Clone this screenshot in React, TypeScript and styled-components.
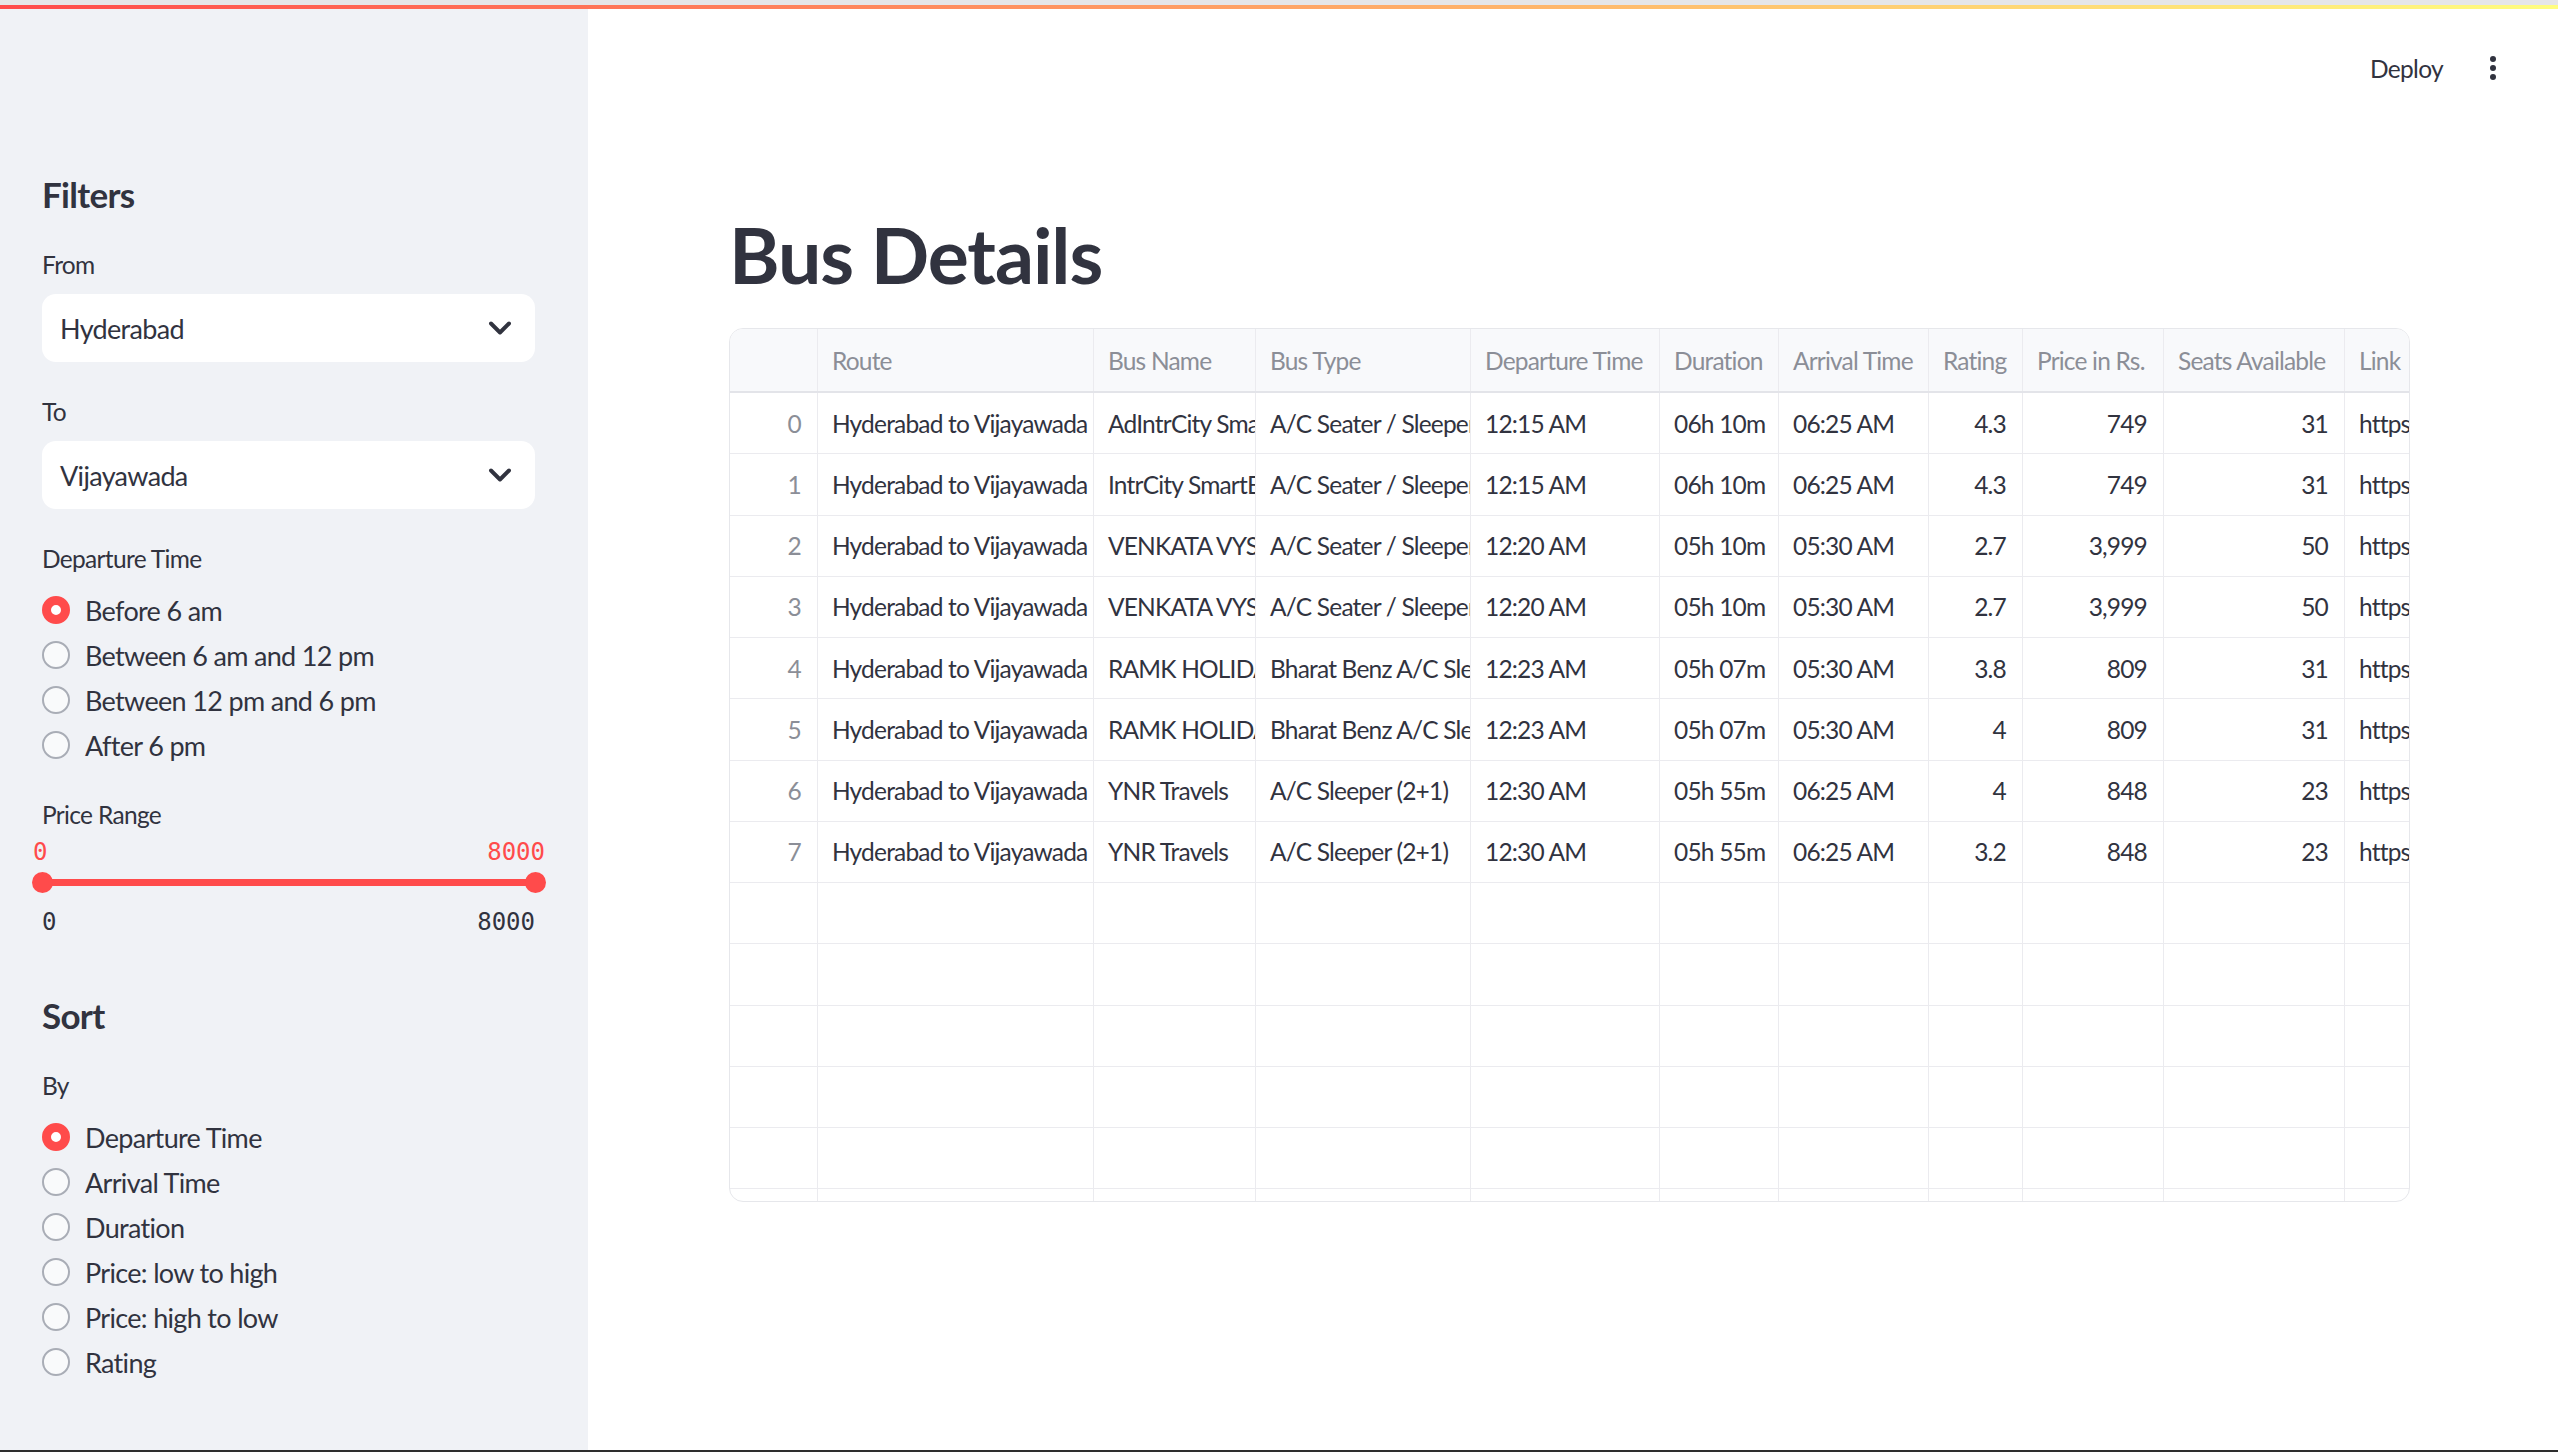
import React from "react";
import styled, { createGlobalStyle } from "styled-components";

const GlobalStyle = createGlobalStyle`
  html, body { margin: 0; padding: 0; background: #ffffff; }
  body {
    font-family: Lato, "Noto Sans", "Liberation Sans", sans-serif;
    color: #31333f;
    letter-spacing: -0.042em;
  }
  * { box-sizing: border-box; }
`;

const Page = styled.div`
  width: 2558px;
  height: 1452px;
  display: flex;
  flex-direction: column;
  overflow: hidden;
  background: #ffffff;
`;

const TopEdge = styled.div`
  height: 5px;
  flex: none;
  background: #e6e6e8;
`;

const Decoration = styled.div`
  height: 4px;
  flex: none;
  background: linear-gradient(90deg, #ff4b4b, #fffd80);
`;

const Body = styled.div`
  flex: 1;
  min-height: 0;
  display: flex;
`;

const BottomEdge = styled.div`
  height: 2px;
  flex: none;
  background: #2e2e2e;
`;

/* ---------- Sidebar ---------- */

const Sidebar = styled.aside`
  width: 588px;
  flex: none;
  background: #f0f2f6;
  padding: 164px 53px 0 42px;
  display: flex;
  flex-direction: column;
`;

const SectionTitle = styled.h2<{ $top?: number }>`
  margin: ${(p) => p.$top ?? 0}px 0 0;
  font-size: 35px;
  line-height: 42px;
  font-weight: 700;
  letter-spacing: -0.02em;
  color: #31333f;
`;

const FieldLabel = styled.div<{ $top?: number; $bottom?: number }>`
  margin: ${(p) => p.$top ?? 31.5}px 0 ${(p) => p.$bottom ?? 12.5}px;
  font-size: 24.5px;
  line-height: 35px;
  color: #31333f;
`;

const SelectBox = styled.div`
  height: 68px;
  background: #ffffff;
  border-radius: 14px;
  display: flex;
  align-items: center;
  justify-content: space-between;
  padding: 0 17px 0 18px;
  font-size: 27px;
  color: #31333f;
`;

const RadioGroup = styled.div`
  display: flex;
  flex-direction: column;
`;

const RadioRow = styled.label`
  height: 45px;
  display: flex;
  align-items: center;
  gap: 15px;
  font-size: 27px;
  color: #31333f;
`;

const RadioDot = styled.span<{ $checked?: boolean }>`
  width: 28px;
  height: 28px;
  flex: none;
  border-radius: 50%;
  background: ${(p) => (p.$checked ? "#ffffff" : "#f9fafb")};
  border: ${(p) => (p.$checked ? "9px solid #ff4b4b" : "2px solid #a9adb6")};
`;

const Slider = styled.div`
  margin-top: 6.5px;
  display: flex;
  flex-direction: column;
`;

const ValueRow = styled.div`
  height: 28px;
  margin: 0 -10px 0 -9px;
  display: flex;
  align-items: center;
  justify-content: space-between;
  font-family: "DejaVu Sans Mono", "Liberation Mono", monospace;
  font-size: 24px;
  letter-spacing: 0;
  color: #ff4b4b;
`;

const TrackRow = styled.div`
  height: 32px;
  margin: 0 -10.5px;
  display: flex;
  align-items: center;
`;

const Thumb = styled.span`
  width: 21px;
  height: 21px;
  flex: none;
  border-radius: 50%;
  background: #ff4b4b;
`;

const TrackBar = styled.span`
  flex: 1;
  height: 7px;
  margin: 0 -2px;
  background: #ff4b4b;
`;

const RangeRow = styled.div`
  height: 48px;
  display: flex;
  align-items: center;
  justify-content: space-between;
  font-family: "DejaVu Sans Mono", "Liberation Mono", monospace;
  font-size: 24px;
  letter-spacing: 0;
  color: #31333f;
`;

/* ---------- Main ---------- */

const Main = styled.main`
  flex: 1;
  min-width: 0;
  display: flex;
  flex-direction: column;
`;

const Toolbar = styled.div`
  height: 118px;
  flex: none;
  display: flex;
  align-items: center;
  justify-content: flex-end;
  gap: 46px;
  padding-right: 61px;
`;

const DeployButton = styled.span`
  font-size: 24.5px;
  color: #31333f;
`;

const Content = styled.div`
  padding-left: 141px;
  display: flex;
  flex-direction: column;
`;

const Title = styled.h1`
  margin: 80.5px 0 0;
  font-size: 77px;
  line-height: 92px;
  font-weight: 700;
  letter-spacing: -0.014em;
  color: #31333f;
`;

const COLUMNS = "88px 276px 162px 215px 189px 119px 150px 94px 141px 181px 1fr";

const Table = styled.div`
  margin-top: 28.5px;
  width: 1681px;
  height: 874px;
  border: 1px solid #e6e7eb;
  border-radius: 14px;
  overflow: hidden;
  display: flex;
  flex-direction: column;
`;

const HeaderRow = styled.div`
  height: 64px;
  flex: none;
  display: grid;
  grid-template-columns: ${COLUMNS};
  background: #f8f9fb;
  border-bottom: 2px solid #e3e4e9;
`;

const Row = styled.div`
  height: 61.25px;
  flex: none;
  display: grid;
  grid-template-columns: ${COLUMNS};
  border-bottom: 1px solid #ebebef;
`;

const FillerRow = styled.div`
  flex: 1;
  display: grid;
  grid-template-columns: ${COLUMNS};
`;

const Cell = styled.div<{ $align?: "left" | "right"; $tone?: "head" | "index" | "body" }>`
  min-width: 0;
  overflow: hidden;
  white-space: nowrap;
  display: flex;
  align-items: center;
  justify-content: ${(p) => (p.$align === "right" ? "flex-end" : "flex-start")};
  padding: ${(p) => (p.$align === "right" ? "0 16px 0 14px" : "0 0 0 14px")};
  border-right: 1px solid #ebebef;
  font-size: 24.5px;
  letter-spacing: -0.033em;
  color: ${(p) => (p.$tone === "head" || p.$tone === "index" ? "#8b8e97" : "#31333f")};
  &:last-child {
    border-right: none;
  }
`;

/* ---------- Icons ---------- */

const Chevron = () => (
  <svg width="36" height="36" viewBox="0 0 24 24" fill="none" stroke="#31333f" strokeWidth="2.6" strokeLinecap="round" strokeLinejoin="round">
    <path d="m6 9 6 6 6-6" />
  </svg>
);

const Kebab = () => (
  <svg width="8" height="24" viewBox="0 0 8 24" fill="#31333f">
    <circle cx="4" cy="3" r="3" />
    <circle cx="4" cy="12" r="3" />
    <circle cx="4" cy="21" r="3" />
  </svg>
);

/* ---------- Data ---------- */

const headers = [
  "",
  "Route",
  "Bus Name",
  "Bus Type",
  "Departure Time",
  "Duration",
  "Arrival Time",
  "Rating",
  "Price in Rs.",
  "Seats Available",
  "Link",
];

const rightAligned = new Set([0, 7, 8, 9]);

const link = "https://www.redbus.in/bus-tickets/hyderabad-to-vijayawada";
const route = "Hyderabad to Vijayawada";

const rows: string[][] = [
  ["0", route, "AdIntrCity SmartBus", "A/C Seater / Sleeper (2+1)", "12:15 AM", "06h 10m", "06:25 AM", "4.3", "749", "31", link],
  ["1", route, "IntrCity SmartBus", "A/C Seater / Sleeper (2+1)", "12:15 AM", "06h 10m", "06:25 AM", "4.3", "749", "31", link],
  ["2", route, "VENKATA VYSHNAVI TRAVELS", "A/C Seater / Sleeper (2+1)", "12:20 AM", "05h 10m", "05:30 AM", "2.7", "3,999", "50", link],
  ["3", route, "VENKATA VYSHNAVI TRAVELS", "A/C Seater / Sleeper (2+1)", "12:20 AM", "05h 10m", "05:30 AM", "2.7", "3,999", "50", link],
  ["4", route, "RAMK HOLIDAYS", "Bharat Benz A/C Sleeper (2+1)", "12:23 AM", "05h 07m", "05:30 AM", "3.8", "809", "31", link],
  ["5", route, "RAMK HOLIDAYS", "Bharat Benz A/C Sleeper (2+1)", "12:23 AM", "05h 07m", "05:30 AM", "4", "809", "31", link],
  ["6", route, "YNR Travels", "A/C Sleeper (2+1)", "12:30 AM", "05h 55m", "06:25 AM", "4", "848", "23", link],
  ["7", route, "YNR Travels", "A/C Sleeper (2+1)", "12:30 AM", "05h 55m", "06:25 AM", "3.2", "848", "23", link],
];

const emptyRows = 5;

const departureOptions = ["Before 6 am", "Between 6 am and 12 pm", "Between 12 pm and 6 pm", "After 6 pm"];
const sortOptions = ["Departure Time", "Arrival Time", "Duration", "Price: low to high", "Price: high to low", "Rating"];

const RadioList = ({ options, selected }: { options: string[]; selected: number }) => (
  <RadioGroup>
    {options.map((o, i) => (
      <RadioRow key={o}>
        <RadioDot $checked={i === selected} />
        {o}
      </RadioRow>
    ))}
  </RadioGroup>
);

const blankCells = () => headers.map((_, i) => <Cell key={i} />);

export default function App() {
  return (
    <>
      <GlobalStyle />
      <Page>
        <TopEdge />
        <Decoration />
        <Body>
          <Sidebar>
            <SectionTitle>Filters</SectionTitle>
            <FieldLabel>From</FieldLabel>
            <SelectBox>
              Hyderabad
              <Chevron />
            </SelectBox>
            <FieldLabel>To</FieldLabel>
            <SelectBox>
              Vijayawada
              <Chevron />
            </SelectBox>
            <FieldLabel $bottom={12}>Departure Time</FieldLabel>
            <RadioList options={departureOptions} selected={0} />
            <FieldLabel $top={29} $bottom={0}>Price Range</FieldLabel>
            <Slider>
              <ValueRow>
                <span>0</span>
                <span>8000</span>
              </ValueRow>
              <TrackRow>
                <Thumb />
                <TrackBar />
                <Thumb />
              </TrackRow>
              <RangeRow>
                <span>0</span>
                <span>8000</span>
              </RangeRow>
            </Slider>
            <SectionTitle $top={48}>Sort</SectionTitle>
            <FieldLabel $bottom={12}>By</FieldLabel>
            <RadioList options={sortOptions} selected={0} />
          </Sidebar>
          <Main>
            <Toolbar>
              <DeployButton>Deploy</DeployButton>
              <Kebab />
            </Toolbar>
            <Content>
              <Title>Bus Details</Title>
              <Table>
                <HeaderRow>
                  {headers.map((h, i) => (
                    <Cell key={i} $tone="head" $align={i === 0 ? "right" : "left"}>
                      {h}
                    </Cell>
                  ))}
                </HeaderRow>
                {rows.map((r) => (
                  <Row key={r[0]}>
                    {r.map((v, i) => (
                      <Cell key={i} $align={rightAligned.has(i) ? "right" : "left"} $tone={i === 0 ? "index" : "body"}>
                        {v}
                      </Cell>
                    ))}
                  </Row>
                ))}
                {Array.from({ length: emptyRows }).map((_, k) => (
                  <Row key={`e${k}`}>{blankCells()}</Row>
                ))}
                <FillerRow>{blankCells()}</FillerRow>
              </Table>
            </Content>
          </Main>
        </Body>
        <BottomEdge />
      </Page>
    </>
  );
}
